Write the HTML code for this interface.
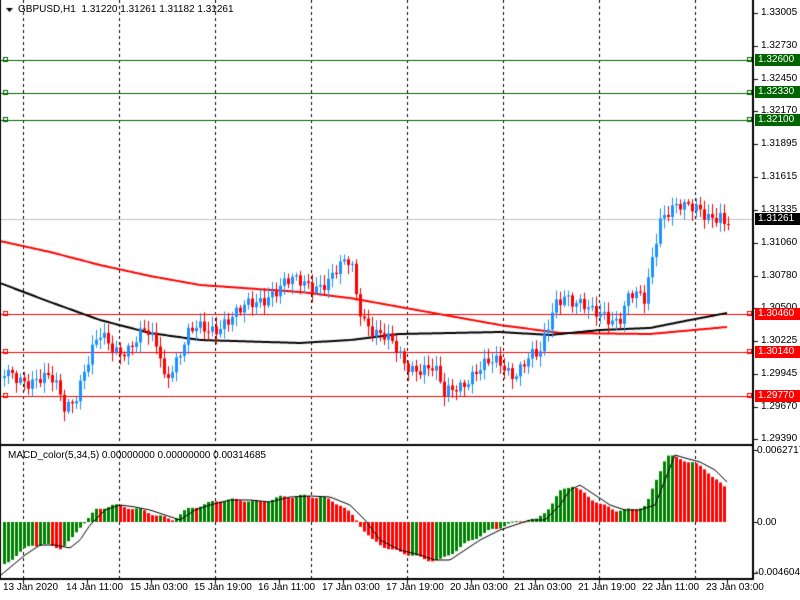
<!DOCTYPE html><html><head><meta charset="utf-8"><style>
body{margin:0;background:#fff;width:800px;height:600px;overflow:hidden;position:relative;font-family:"Liberation Sans",sans-serif;font-size:10px;color:#000}
canvas{position:absolute;left:0;top:0}
.t{position:absolute;white-space:nowrap;line-height:12px}
.lab{position:absolute;left:755px;width:42px;height:12px;color:#fff;line-height:12px;padding-left:3px}
</style></head><body>
<canvas id="c" width="800" height="600"></canvas>
<div class="t" style="left:18px;top:4px">GBPUSD,H1&nbsp; 1.31220 1.31261 1.31182 1.31261</div>
<div class="t" style="left:8px;top:450px">MACD_color(5,34,5) 0.00000000 0.00000000 0.00314685</div>
<div class="t" style="left:761px;top:7px">1.33005</div>
<div class="t" style="left:761px;top:40px">1.32730</div>
<div class="t" style="left:761px;top:73px">1.32450</div>
<div class="t" style="left:761px;top:105px">1.32170</div>
<div class="t" style="left:761px;top:138px">1.31895</div>
<div class="t" style="left:761px;top:171px">1.31615</div>
<div class="t" style="left:761px;top:204px">1.31335</div>
<div class="t" style="left:761px;top:237px">1.31060</div>
<div class="t" style="left:761px;top:270px">1.30780</div>
<div class="t" style="left:761px;top:302px">1.30500</div>
<div class="t" style="left:761px;top:335px">1.30225</div>
<div class="t" style="left:761px;top:368px">1.29945</div>
<div class="t" style="left:761px;top:401px">1.29670</div>
<div class="t" style="left:761px;top:433px">1.29390</div>
<div class="lab" style="top:54px;background:#006400">1.32600</div>
<div class="lab" style="top:86px;background:#006400">1.32330</div>
<div class="lab" style="top:114px;background:#006400">1.32100</div>
<div class="lab" style="top:213px;background:#000">1.31261</div>
<div class="lab" style="top:308px;background:#f00">1.30460</div>
<div class="lab" style="top:346px;background:#f00">1.30140</div>
<div class="lab" style="top:390px;background:#f00">1.29770</div>
<div class="t" style="left:757px;top:445px">0.0062717</div>
<div class="t" style="left:757px;top:517px">0.00</div>
<div class="t" style="left:755px;top:567px">-0.004604</div>
<div class="t" style="left:3px;top:582px">13 Jan 2020</div>
<div class="t" style="left:66px;top:582px">14 Jan 11:00</div>
<div class="t" style="left:130px;top:582px">15 Jan 03:00</div>
<div class="t" style="left:194px;top:582px">15 Jan 19:00</div>
<div class="t" style="left:258px;top:582px">16 Jan 11:00</div>
<div class="t" style="left:322px;top:582px">17 Jan 03:00</div>
<div class="t" style="left:386px;top:582px">17 Jan 19:00</div>
<div class="t" style="left:450px;top:582px">20 Jan 03:00</div>
<div class="t" style="left:514px;top:582px">21 Jan 03:00</div>
<div class="t" style="left:578px;top:582px">21 Jan 19:00</div>
<div class="t" style="left:642px;top:582px">22 Jan 11:00</div>
<div class="t" style="left:706px;top:582px">23 Jan 03:00</div>
<script>
const c=document.getElementById('c').getContext('2d');
function interp(pts,x){for(let i=1;i<pts.length;i++){if(x<=pts[i][0]){const a=pts[i-1],b=pts[i];return a[1]+(b[1]-a[1])*(x-a[0])/(b[0]-a[0]);}}return pts[pts.length-1][1];}
c.fillStyle='#000';
c.fillRect(0,0,1,444);
c.fillRect(752,0,2,446);c.fillRect(0,444,754,2);
c.fillRect(0,446,1,134);c.fillRect(752,446,2,134);c.fillRect(0,578,754,2);
[13,46,79,111,144,177,210,243,276,308,341,374,407,439].forEach(y=>c.fillRect(754,y,4,1));
[450,522,573].forEach(y=>c.fillRect(754,y,4,1));
[23,87,151,215,279,343,407,471,535,599,663,727].forEach(x=>c.fillRect(x,580,1,4));
[23,119,215,311,407,503,599,695].forEach(x=>{for(let y=0;y<578;y+=6){if(y>=444&&y<446)continue;c.fillRect(x,y,1,3);}});
function hl(y,col){c.fillStyle=col;c.fillRect(1,y,751,1);c.strokeStyle=col;c.lineWidth=1;c.strokeRect(3.5,y-2.5,4,4);c.strokeRect(747.5,y-2.5,4,4);}
c.fillStyle='#c0c0c0';c.fillRect(1,219,751,1);
hl(60,'#006400');hl(93,'#006400');hl(120,'#006400');
hl(314,'#f00');hl(352,'#f00');hl(396,'#f00');
function ma(pts,col){c.strokeStyle=col;c.lineWidth=2;c.beginPath();for(let x=1;x<=727;x+=2){const y=interp(pts,x);x==1?c.moveTo(x,y):c.lineTo(x,y);}c.stroke();}
ma([[0,241],[50,252],[100,265],[150,276],[200,285],[300,292],[350,298],[400,307],[450,316],[500,325],[560,333],[650,334],[727,327]],'#f00');
ma([[0,283],[50,302],[100,320],[150,333],[200,340],[300,343],[350,340],[400,334],[500,332],[550,335],[600,330],[650,328],[690,320],[727,313]],'#000');
const P=[[3,378],[20,375],[40,380],[55,385],[65,405],[75,395],[85,370],[100,340],[115,348],[130,345],[145,335],[160,350],[165,375],[175,360],[190,335],[210,330],[225,318],[240,315],[255,305],[270,290],[285,285],[300,285],[315,282],[330,280],[345,268],[352,262],[358,300],[365,315],[375,330],[390,345],[405,362],[420,365],[435,372],[445,398],[455,385],[470,375],[485,370],[500,362],[515,370],[530,360],[540,360],[548,330],[555,300],[565,290],[575,305],[590,315],[605,310],[620,320],[630,300],[645,300],[652,260],[660,215],[670,210],[685,212],[700,205],[715,215],[727,222]];
let prev=interp(P,3);
for(let x=3;x<=727;x+=4){
 let cl=interp(P,x+2)+Math.sin(x*1.7)*7+Math.sin(x*0.53)*5;
 if(x>=723)cl=224;
 const o=prev;const up=cl<o;
 const hi=Math.min(o,cl)-2-Math.abs(Math.sin(x*2.3))*8,lo=Math.max(o,cl)+2+Math.abs(Math.cos(x*1.9))*8;
 c.fillStyle=up?'#1e90ff':'#f00';
 c.fillRect(x+1,hi,1,lo-hi);
 c.fillRect(x,Math.min(o,cl),3,Math.max(1,Math.abs(o-cl)));
 prev=cl;
}
const M=[[3,565],[15,555],[30,545],[45,545],[60,548],[70,540],[80,525],[95,510],[110,505],[125,507],[140,510],[155,515],[170,520],[185,510],[200,505],[220,500],[240,500],[260,502],[280,497],[300,496],[320,497],[340,505],[355,520],[370,540],[390,550],[410,555],[425,560],[440,560],[455,550],[470,540],[490,530],[505,525],[520,520],[535,520],[550,505],[560,490],[570,485],[585,495],[600,505],[615,510],[630,510],[645,505],[655,480],[665,455],[675,458],[690,462],[705,470],[720,485],[727,490]];
let pv=575;
for(let x=3;x<=723;x+=4){const v=interp(M,x)+Math.sin(x*1.3)*1.5;c.fillStyle=v<=pv?'#008000':'#f00';
 c.fillRect(x,Math.min(v,522),3,Math.max(1,Math.abs(v-522)));pv=v;}
c.strokeStyle='#000';c.lineWidth=1;c.beginPath();
const S=M.map(p=>[p[0]+10,p[1]]);S.unshift([1,575]);
for(let x=1;x<=727;x+=2){const y=interp(S,x);x==1?c.moveTo(x,y):c.lineTo(x,y);}c.stroke();
c.fillStyle='#000';c.beginPath();c.moveTo(6,8);c.lineTo(13,8);c.lineTo(9.5,12);c.fill();
</script>
</body></html>
